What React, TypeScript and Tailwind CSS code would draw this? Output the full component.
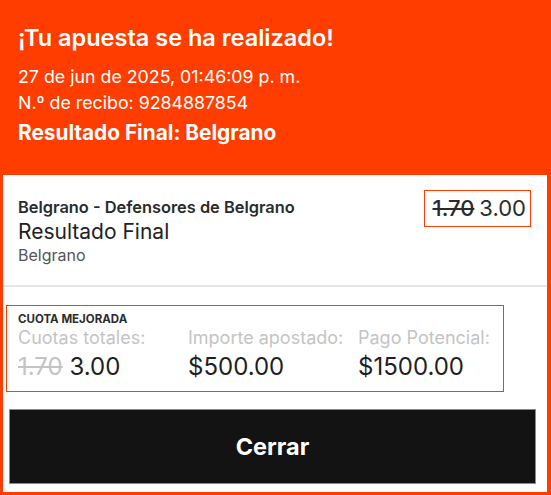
import React from 'react';

const font = { fontFamily: 'Inter, "Noto Sans", sans-serif' };

const Stat = ({ label, children }: { label: string; children: React.ReactNode }) => (
  <div className="flex flex-col">
    <span className="mt-[2px] text-[18px] leading-[22px] text-[#c4c4c4]">{label}</span>
    <span className="mt-[3px] text-[24px] leading-[30px] text-[#1f1f1f]">{children}</span>
  </div>
);

const App = () => {
  return (
    <div className="w-[551px] h-[495px] bg-[#ff3d00] pl-[3px] pr-[4px] pb-[3px] flex flex-col" style={font}>
      {/* Header */}
      <div className="h-[175px] shrink-0 px-[15px] pt-[24px] text-white flex flex-col">
        <h1 className="text-[23.5px] leading-[28px] font-semibold">¡Tu apuesta se ha realizado!</h1>
        <p className="mt-[13px] text-[17.8px] leading-[24px]">27 de jun de 2025, 01:46:09 p. m.</p>
        <p className="mt-[2px] text-[17.8px] leading-[24px]">N.º de recibo: 9284887854</p>
        <p className="mt-[6px] text-[20.8px] leading-[24px] font-bold">Resultado Final: Belgrano</p>
      </div>

      {/* Body */}
      <div className="flex-1 bg-white flex flex-col">
        <div className="h-[110px] shrink-0 pl-[15px] pr-[16px] pt-[15px] flex justify-between items-start">
          <div className="mt-[7px] flex flex-col">
            <span className="text-[16.4px] leading-[20px] font-semibold text-[#2b2b2b]">Belgrano - Defensores de Belgrano</span>
            <span className="mt-[2px] text-[21px] leading-[26px] text-[#222]">Resultado Final</span>
            <span className="text-[16px] leading-[20px] text-[#555]">Belgrano</span>
          </div>
          <div className="h-[37px] border border-[#ff3d00] pl-[8px] pr-[4px] flex items-center gap-[5px] text-[22px] text-[#2b2b2b]">
            <span className="line-through font-medium">1.70</span>
            <span>3.00</span>
          </div>
        </div>
        <div className="h-[2px] bg-[#e6e6e6]" />

        <div className="ml-[3px] mt-[18px] w-[498px] h-[87px] border border-[#ff3d00] pl-[11px] pt-[7px]">
          <div className="text-[11.5px] leading-[12px] font-bold text-[#2b2b2b]">CUOTA MEJORADA</div>
          <div className="grid grid-cols-[170px_170px_1fr]">
            <Stat label="Cuotas totales:">
              <span className="line-through text-[#c4c4c4]">1.70</span> 3.00
            </Stat>
            <Stat label="Importe apostado:">$500.00</Stat>
            <Stat label="Pago Potencial:">$1500.00</Stat>
          </div>
        </div>

        <button className="ml-[6px] mt-[17px] w-[527px] h-[75px] bg-[#131313] border border-[#8a8a8a] text-white text-[23.5px] font-bold">
          Cerrar
        </button>
      </div>
    </div>
  );
};

export default App;
